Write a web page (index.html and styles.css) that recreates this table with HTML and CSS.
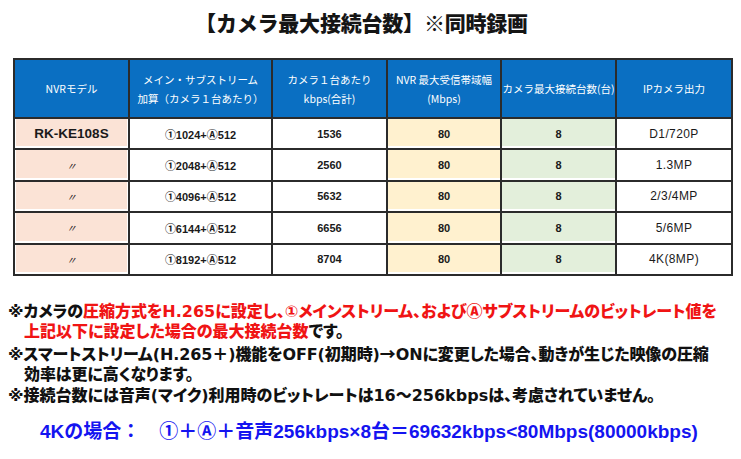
FILE: index.html
```html
<!DOCTYPE html>
<html lang="ja">
<head>
<meta charset="utf-8">
<link rel="stylesheet" href="styles.css">
</head>
<body>
<h1 class="title">【カメラ最大接続台数】※同時録画</h1>
<table class="spec">
  <colgroup>
    <col class="c1"><col class="c2"><col class="c3"><col class="c4"><col class="c5"><col class="c6">
  </colgroup>
  <thead>
    <tr>
      <th>NVRモデル</th>
      <th>メイン・サブストリーム<br>加算（カメラ１台あたり）</th>
      <th>カメラ１台あたり<br>kbps(合計)</th>
      <th>NVR 最大受信帯域幅<br>(Mbps)</th>
      <th>カメラ最大接続台数(台)</th>
      <th>IPカメラ出力</th>
    </tr>
  </thead>
  <tbody>
    <tr>
      <td class="model"><b>RK-KE108S</b></td>
      <td>①1024+Ⓐ512</td><td>1536</td><td class="bw">80</td><td class="cnt">8</td><td class="out">D1/720P</td>
    </tr>
    <tr>
      <td class="model"><span class="ditto">〃</span></td>
      <td>①2048+Ⓐ512</td><td>2560</td><td class="bw">80</td><td class="cnt">8</td><td class="out">1.3MP</td>
    </tr>
    <tr>
      <td class="model"><span class="ditto">〃</span></td>
      <td>①4096+Ⓐ512</td><td>5632</td><td class="bw">80</td><td class="cnt">8</td><td class="out">2/3/4MP</td>
    </tr>
    <tr>
      <td class="model"><span class="ditto">〃</span></td>
      <td>①6144+Ⓐ512</td><td>6656</td><td class="bw">80</td><td class="cnt">8</td><td class="out">5/6MP</td>
    </tr>
    <tr>
      <td class="model"><span class="ditto">〃</span></td>
      <td>①8192+Ⓐ512</td><td>8704</td><td class="bw">80</td><td class="cnt">8</td><td class="out">4K(8MP)</td>
    </tr>
  </tbody>
</table>
<div class="notes">
  <p class="note">※カメラの<span class="red">圧縮方式をH.265に設定し、①メインストリーム、およびⒶサブストリームのビットレート値を<br>上記以下に設定した場合の最大接続台数</span>です。</p>
  <p class="note tight">※スマートストリーム(H.265＋)機能をOFF(初期時)<span class="cjk">→</span>ONに変更した場合、動きが生じた映像の圧縮<br>効率は更に高くなります。</p>
  <p class="note">※接続台数には音声(マイク)利用時のビットレートは16～256kbpsは、考慮されていません。</p>
</div>
<p class="calc">4Kの場合：　①＋Ⓐ＋音声256kbps×8台＝69632kbps&lt;80Mbps(80000kbps)</p>
</body>
</html>
```
FILE: styles.css
```css
html, body {
  margin: 0;
  padding: 0;
  background: #ffffff;
}
body {
  width: 741px;
  font-family: "Noto Sans CJK JP", "Noto Sans", sans-serif;
  color: #111;
}
.title {
  margin: 0;
  padding: 8px 18px 0 0;
  height: 58px;
  box-sizing: border-box;
  text-align: center;
  font-size: 21px;
  font-weight: 900;
  line-height: 28px;
  letter-spacing: -0.2px;
  color: #151515;
}
.spec {
  margin-left: 13px;
  width: 718px;
  border-collapse: collapse;
  table-layout: fixed;
  font-family: "Liberation Sans", "Noto Sans CJK JP", sans-serif;
  font-size: 11px;
}
.c1 { width: 115px; }
.c2 { width: 143px; }
.c3 { width: 115px; }
.c4 { width: 114px; }
.c5 { width: 115px; }
.c6 { width: 116px; }
.spec th, .spec td {
  border: 2px solid #2b2b2b;
  text-align: center;
  padding: 0;
}
.spec th {
  background: #0a6fc2;
  color: #ffffff;
  font-weight: 400;
  font-size: 10.5px;
  line-height: 19px;
  height: 57px;
  font-family: "Noto Sans CJK JP", sans-serif;
}
.spec td {
  height: 29.4px;
  color: #1a1a1a;
  font-weight: 700;
}
.model {
  background: #fbe3d6;
  box-shadow: inset 1px 0 0 #fff, inset -1px -2px 0 #fff;
}
.model b {
  font-size: 13.5px;
  font-weight: 700;
}
.ditto {
  font-size: 10px;
  font-style: italic;
  font-weight: 400;
}
.bw {
  background: #fff1cf;
  box-shadow: inset 0 -2px 0 #fff;
}
.cnt {
  background: #e3efdb;
  box-shadow: inset 0 -2px 0 #fff;
}
.spec td.out {
  font-size: 12px;
  font-weight: 400;
  letter-spacing: 0.4px;
}
.notes {
  margin-top: 26px;
  padding-left: 8px;
  font-family: "DejaVu Sans", "Noto Sans CJK JP", sans-serif;
  font-feature-settings: "palt" 1;
}
.note {
  margin: 0;
  padding-left: 16px;
  text-indent: -16px;
  font-size: 16px;
  font-weight: 900;
  line-height: 20.5px;
  color: #111;
  white-space: nowrap;
}
.tight {
  letter-spacing: -0.1px;
}
.cjk {
  font-family: "Noto Sans CJK JP", sans-serif;
}
.red {
  color: #f01414;
}
.calc {
  margin: 15px 0 0 40px;
  font-family: "Liberation Sans", "Noto Sans CJK JP", sans-serif;
  font-size: 19px;
  font-weight: 700;
  line-height: 22px;
  color: #1414f0;
  white-space: nowrap;
}
```
